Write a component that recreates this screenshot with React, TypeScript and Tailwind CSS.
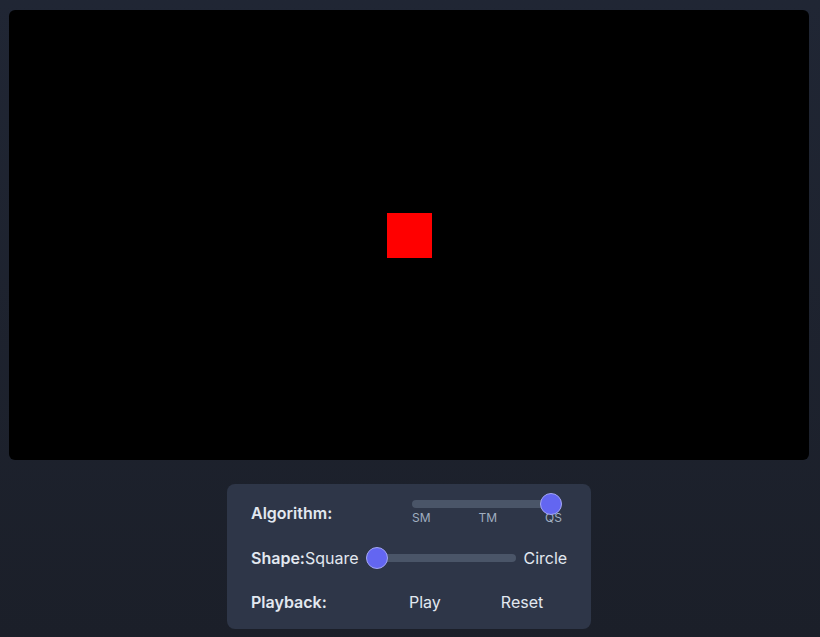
import React from "react";

function Track({ value }: { value: number }) {
  // value 0..1, track 150px, thumb 22px
  const left = value * (150 - 22);
  return (
    <div className="relative h-[22px] w-[150px]">
      <div className="absolute left-0 right-0 top-[7px] h-[8px] rounded-full bg-[#4a5568]" />
      <div
        className="absolute top-0 h-[22px] w-[22px] rounded-full border border-[#a3a6f5] bg-[#6366f1]"
        style={{ left }}
      />
    </div>
  );
}

export default function App() {
  return (
    <div
      className="min-h-[637px] w-full bg-gradient-to-b from-[#202634] to-[#1b1f29] text-[#e2e8f0]"
      style={{ fontFamily: "Inter, 'Noto Sans', sans-serif" }}
    >
      <div className="ml-[9px] w-[800px] pt-[10px]">
        <div className="flex h-[450px] w-[800px] items-center justify-center rounded-md bg-black">
          <div className="h-[45px] w-[45px] bg-[#ff0000]" />
        </div>
        <div className="ml-[218px] mt-6 flex w-[364px] flex-col rounded-lg bg-[#2e3648] px-6 pb-[15px] pt-[9px] text-base">
          <div className="flex items-start">
            <div className="mt-2 w-[161px] font-semibold leading-6">Algorithm:</div>
            <div className="flex w-[150px] flex-col">
              <Track value={1} />
              <div className="-mt-[3px] flex justify-between text-xs leading-3 text-[#a0aec0]">
                <span>SM</span>
                <span>TM</span>
                <span>QS</span>
              </div>
            </div>
          </div>
          <div className="mt-[21px] flex h-6 items-center leading-6">
            <span className="font-semibold">Shape:</span>
            <span>Square</span>
            <div className="ml-[7px]">
              <Track value={0} />
            </div>
            <span className="ml-2">Circle</span>
          </div>
          <div className="mt-5 flex h-6 items-center leading-6">
            <div className="w-[142px] font-semibold">Playback:</div>
            <button className="px-4">Play</button>
            <button className="ml-[28px] px-4">Reset</button>
          </div>
        </div>
      </div>
    </div>
  );
}
